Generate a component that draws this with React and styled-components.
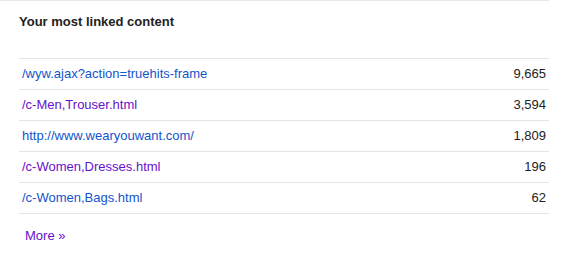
import React from 'react';
import styled, { createGlobalStyle } from 'styled-components';

const GlobalStyle = createGlobalStyle`
  body {
    margin: 0;
    background: #fff;
    font-family: Arial, "Liberation Sans", sans-serif;
    font-size: 13px;
  }
`;

const rows = [
  { path: '/wyw.ajax?action=truehits-frame', count: '9,665', visited: false },
  { path: '/c-Men,Trouser.html', count: '3,594', visited: true },
  { path: 'http://www.wearyouwant.com/', count: '1,809', visited: false },
  { path: '/c-Women,Dresses.html', count: '196', visited: true },
  { path: '/c-Women,Bags.html', count: '62', visited: false },
];

const Panel = styled.div`
  width: 530px;
  padding: 13px 0 0 19px;
  border-top: 1px solid #e8e8e8;
`;

const Title = styled.h2`
  margin: 0 0 28px;
  font-size: 13px;
  line-height: 16px;
  font-weight: bold;
  color: #222;
`;

const List = styled.div`
  display: flex;
  flex-direction: column;
  border-top: 1px solid #e5e5e5;
`;

const Row = styled.div`
  display: flex;
  align-items: center;
  justify-content: space-between;
  height: 30px;
  padding: 0 3px;
  border-bottom: 1px solid #e5e5e5;
`;

const Link = styled.a`
  color: ${p => (p.$visited ? '#6611cc' : '#1155cc')};
  text-decoration: none;
  line-height: 30px;
`;

const Count = styled.span`
  color: #222;
  line-height: 30px;
`;

const More = styled.a`
  display: inline-block;
  margin: 14px 0 0 6px;
  line-height: 16px;
  color: #6611cc;
  text-decoration: none;
`;

export default function App() {
  return (
    <>
      <GlobalStyle />
      <Panel>
        <Title>Your most linked content</Title>
        <List>
          {rows.map(r => (
            <Row key={r.path}>
              <Link href="#" $visited={r.visited}>{r.path}</Link>
              <Count>{r.count}</Count>
            </Row>
          ))}
        </List>
        <More href="#">More »</More>
      </Panel>
    </>
  );
}
